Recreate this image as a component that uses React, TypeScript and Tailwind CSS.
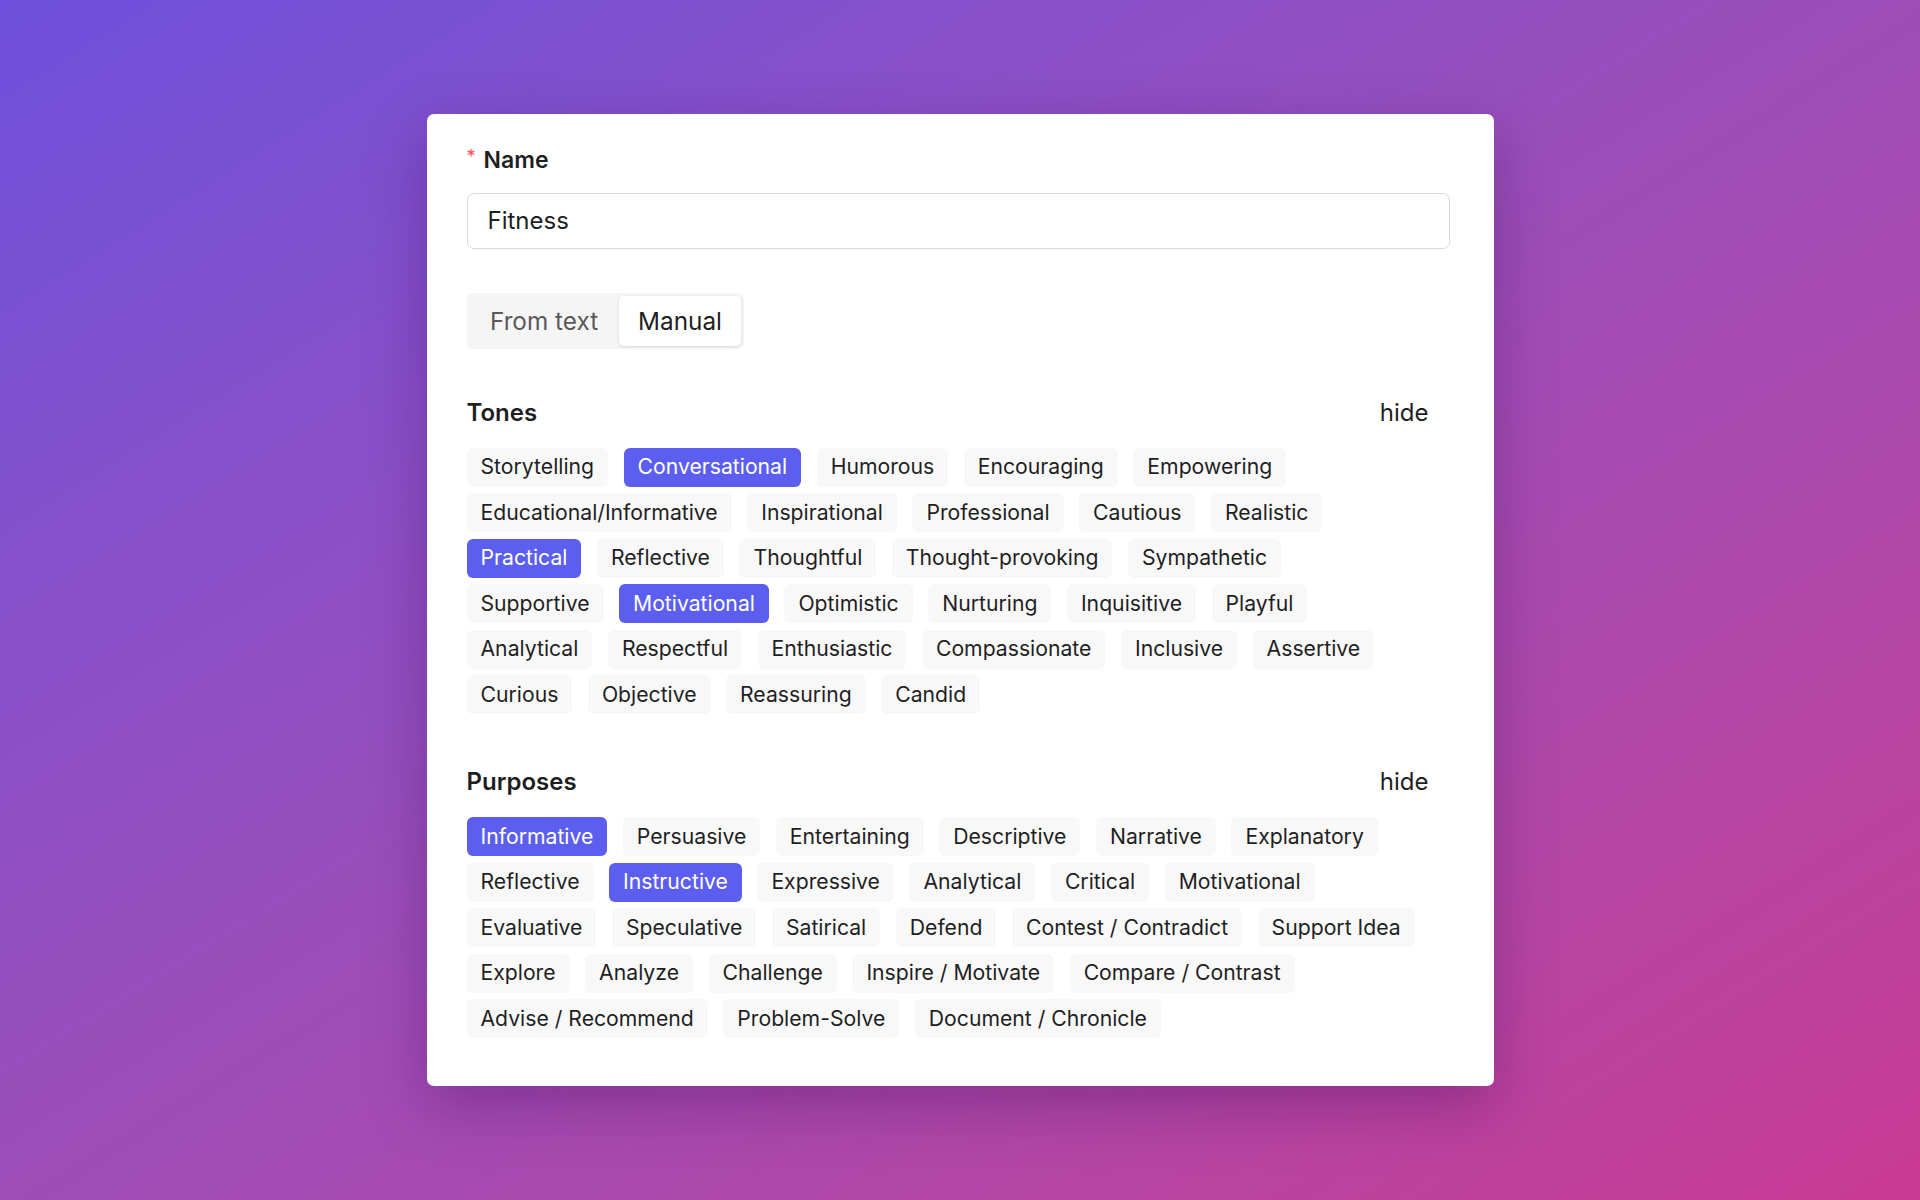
const tones: [string, boolean][][] = [
  [["Storytelling", false], ["Conversational", true], ["Humorous", false], ["Encouraging", false], ["Empowering", false]],
  [["Educational/Informative", false], ["Inspirational", false], ["Professional", false], ["Cautious", false], ["Realistic", false]],
  [["Practical", true], ["Reflective", false], ["Thoughtful", false], ["Thought-provoking", false], ["Sympathetic", false]],
  [["Supportive", false], ["Motivational", true], ["Optimistic", false], ["Nurturing", false], ["Inquisitive", false], ["Playful", false]],
  [["Analytical", false], ["Respectful", false], ["Enthusiastic", false], ["Compassionate", false], ["Inclusive", false], ["Assertive", false]],
  [["Curious", false], ["Objective", false], ["Reassuring", false], ["Candid", false]],
];

const purposes: [string, boolean][][] = [
  [["Informative", true], ["Persuasive", false], ["Entertaining", false], ["Descriptive", false], ["Narrative", false], ["Explanatory", false]],
  [["Reflective", false], ["Instructive", true], ["Expressive", false], ["Analytical", false], ["Critical", false], ["Motivational", false]],
  [["Evaluative", false], ["Speculative", false], ["Satirical", false], ["Defend", false], ["Contest / Contradict", false], ["Support Idea", false]],
  [["Explore", false], ["Analyze", false], ["Challenge", false], ["Inspire / Motivate", false], ["Compare / Contrast", false]],
  [["Advise / Recommend", false], ["Problem-Solve", false], ["Document / Chronicle", false]],
];

const Chip = ({ label, on }: { label: string; on: boolean }) => (
  <span
    className={
      on
        ? "h-[39px] px-[14px] flex items-center rounded-[6px] bg-[#5b5eef] text-white text-[21.2px] whitespace-nowrap"
        : "h-[39px] px-[14px] flex items-center rounded-[6px] bg-[#f8f8f8] text-[#1f1f1f] text-[21.2px] whitespace-nowrap"
    }
  >
    {label}
  </span>
);

const Section = ({ title, rows }: { title: string; rows: [string, boolean][][] }) => (
  <div className="flex flex-col">
    <div className="flex items-center justify-between h-[30px] mb-[20px]">
      <p className="text-[24px] font-semibold text-[#1f1f1f]">{title}</p>
      <button type="button" className="text-[24px] text-[#1f1f1f] pr-[21px]">
        hide
      </button>
    </div>
    <div className="flex flex-col gap-y-[6.5px]">
      {rows.map((row, i) => (
        <div key={i} className="flex gap-x-[15.5px]">
          {row.map(([label, on]) => (
            <Chip key={label} label={label} on={on} />
          ))}
        </div>
      ))}
    </div>
  </div>
);

const App = () => (
  <div className="min-h-screen w-full flex items-center justify-center bg-gradient-to-br from-[#6e50dc] to-[#c93a93] font-['Inter',sans-serif]">
    <div className="w-[1067px] bg-white rounded-[7px] shadow-[0_20px_60px_rgba(60,10,90,0.35)] pl-[40px] pr-[44px] pt-[31px] pb-[48px] flex flex-col">
      <label className="h-[30px] flex items-center mb-[18px] text-[23px] font-semibold text-[#1f1f1f]" htmlFor="name">
        <span className="text-[#ff4d4f] text-[18px] font-normal mr-[8px] -mt-[6px]">*</span>
        Name
      </label>
      <input
        id="name"
        type="text"
        defaultValue="Fitness"
        autoComplete="off"
        className="w-full h-[56px] border-[1.5px] border-[#d9d9d9] rounded-[7px] px-[20px] text-[24px] text-[#1f1f1f] outline-none"
      />
      <div className="mt-[44px] self-start flex p-[3px] bg-[#f5f5f5] rounded-[7px]">
        <span className="h-[50px] px-[20.5px] flex items-center text-[24.3px] text-[#595959]">From text</span>
        <span className="h-[50px] px-[19.5px] flex items-center text-[24.3px] text-[#1f1f1f] bg-white rounded-[5px] shadow-[0_1px_3px_rgba(0,0,0,0.12)]">
          Manual
        </span>
      </div>
      <div className="mt-[49px]">
        <Section title="Tones" rows={tones} />
      </div>
      <div className="mt-[53px]">
        <Section title="Purposes" rows={purposes} />
      </div>
    </div>
  </div>
);

export default App;
